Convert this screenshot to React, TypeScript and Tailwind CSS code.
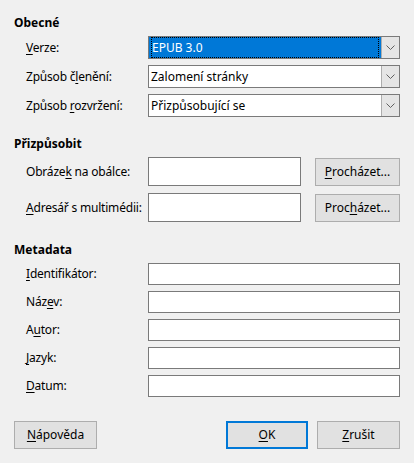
import { ReactNode } from "react"

// Renders a label with the accelerator letter underlined
const Acc = ({ text, at }: { text: string, at: number }) => (
    <>
        {text.slice(0, at)}
        <span className="underline underline-offset-2">{text.charAt(at)}</span>
        {text.slice(at + 1)}
    </>
)

const Chevron = () => (
    <svg width="9" height="6" viewBox="0 0 9 6" className="block">
        <path d="M0.5 0.5 L4.5 4.5 L8.5 0.5" fill="none" stroke="#606060" strokeWidth="1" />
    </svg>
)

const Combo = ({ value, focused }: { value: string, focused?: boolean }) => (
    <div className="flex h-[23px] w-[252px] border border-[#7a7a7a] bg-white">
        <div className={`flex-1 flex items-center px-[2px] ${focused ? "bg-[#0078d7] text-white" : ""}`}>
            {focused ? (
                <div className="relative flex items-center h-full w-full pl-[1px]">
                    <span className="absolute inset-0 border border-dotted border-black" />
                    {value}
                </div>
            ) : value}
        </div>
        <div className="w-[18px] flex items-center justify-center bg-[#e5e5e5] border-l border-[#adadad]">
            <Chevron />
        </div>
    </div>
)

const Btn = ({ children, primary, w }: { children: ReactNode, primary?: boolean, w: string }) => (
    <button
        className={`${w} h-[28px] shrink-0 bg-[#e1e1e1] flex items-center justify-center ${primary ? "border-2 border-[#0078d7]" : "border border-[#adadad]"}`}
    >{children}</button>
)

const Heading = ({ children }: { children: ReactNode }) => (
    <h2 className="font-bold leading-[16px]">{children}</h2>
)

const Row = ({ label, children }: { label: ReactNode, children: ReactNode }) => (
    <div className="flex items-center">
        <div className="w-[134px] shrink-0 pl-[12px] whitespace-nowrap tracking-[-0.2px]">{label}</div>
        {children}
    </div>
)

const Field = ({ h, w }: { h: string, w: string }) => (
    <div className={`${h} ${w} shrink-0 bg-white border border-[#7a7a7a]`} />
)

const App = () => {
    const meta: [string, number][] = [
        ["Identifikátor:", 0],
        ["Název:", 3],
        ["Autor:", 1],
        ["Jazyk:", 0],
        ["Datum:", 0],
    ]

    return (
        <div
            className="w-[414px] h-[463px] bg-[#f0f0f0] text-black text-[12px] px-[14px] pt-[15px] flex flex-col"
            style={{ fontFamily: '"Noto Sans", "Open Sans", sans-serif' }}
        >
            <Heading>Obecné</Heading>
            <div className="flex flex-col gap-[6px] mt-[5px]">
                <Row label={<Acc text="Verze:" at={0} />}>
                    <Combo value="EPUB 3.0" focused />
                </Row>
                <Row label={<Acc text="Způsob členění:" at={8} />}>
                    <Combo value="Zalomení stránky" />
                </Row>
                <Row label={<Acc text="Způsob rozvržení:" at={7} />}>
                    <Combo value="Přizpůsobující se" />
                </Row>
            </div>

            <div className="mt-[19px]">
                <Heading>Přizpůsobit</Heading>
            </div>
            <div className="flex flex-col gap-[7px] mt-[5px]">
                <Row label={<Acc text="Obrázek na obálce:" at={6} />}>
                    <Field h="h-[29px]" w="w-[153px]" />
                    <div className="ml-[14px]">
                        <Btn w="w-[85px]"><Acc text="Procházet..." at={0} /></Btn>
                    </div>
                </Row>
                <Row label={<Acc text="Adresář s multimédii:" at={0} />}>
                    <Field h="h-[29px]" w="w-[153px]" />
                    <div className="ml-[14px]">
                        <Btn w="w-[85px]"><Acc text="Procházet..." at={4} /></Btn>
                    </div>
                </Row>
            </div>

            <div className="mt-[20px]">
                <Heading>Metadata</Heading>
            </div>
            <div className="flex flex-col gap-[6px] mt-[5px]">
                {meta.map(([text, at]) => (
                    <Row key={text} label={<Acc text={text} at={at} />}>
                        <Field h="h-[22px]" w="w-[252px]" />
                    </Row>
                ))}
            </div>

            <div className="flex items-center mt-[24px]">
                <Btn w="w-[83px]"><Acc text="Nápověda" at={0} /></Btn>
                <div className="flex-1" />
                <div className="flex gap-[9px]">
                    <Btn w="w-[82px]" primary><Acc text="OK" at={0} /></Btn>
                    <Btn w="w-[83px]"><Acc text="Zrušit" at={0} /></Btn>
                </div>
            </div>
        </div>
    )
}

export default App
